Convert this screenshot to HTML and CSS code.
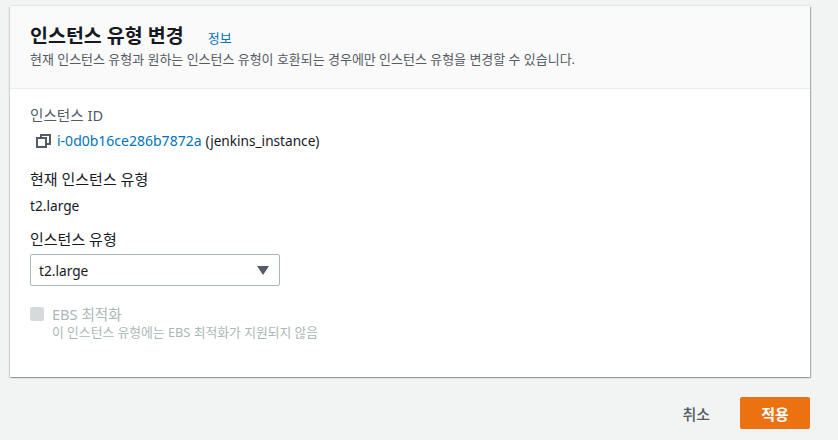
FILE: index.html
```html
<!DOCTYPE html>
<html lang="ko">
<head>
  <meta charset="UTF-8">
  <title>인스턴스 유형 변경</title>
  <link rel="stylesheet" href="styles.css">
</head>
<body>
  <div class="container">
    <div class="card">
      <div class="card-header">
        <div class="title-row">
          <h1>인스턴스 유형 변경</h1>
          <a class="info-link" href="#">정보</a>
        </div>
        <p class="description">현재 인스턴스 유형과 원하는 인스턴스 유형이 호환되는 경우에만 인스턴스 유형을 변경할 수 있습니다.</p>
      </div>
      <div class="card-body">
        <div class="field-label muted">인스턴스 ID</div>
        <div class="instance-row">
          <svg class="copy-icon" width="15" height="14" viewBox="0 0 15 14" fill="none" stroke="#545b64" stroke-width="2">
            <rect x="1" y="4" width="9" height="9"/>
            <path d="M5 4V1h9v9h-4"/>
          </svg>
          <a class="instance-link" href="#">i-0d0b16ce286b7872a</a>
          <span class="instance-name">(jenkins_instance)</span>
        </div>
        <div class="field-label current-label">현재 인스턴스 유형</div>
        <div class="current-value">t2.large</div>
        <div class="field-label type-label">인스턴스 유형</div>
        <div class="select-box">
          <span>t2.large</span>
          <span class="select-arrow"></span>
        </div>
        <div class="checkbox-row">
          <span class="checkbox"></span>
          <div>
            <div class="checkbox-label">EBS 최적화</div>
            <div class="checkbox-hint">이 인스턴스 유형에는 EBS 최적화가 지원되지 않음</div>
          </div>
        </div>
      </div>
    </div>
    <div class="actions">
      <button class="btn-cancel">취소</button>
      <button class="btn-apply">적용</button>
    </div>
  </div>
</body>
</html>
```

FILE: styles.css
```css
body {
  margin: 0;
  background-color: #f2f3f3;
  color: #16191f;
  font-family: "Noto Sans", "Noto Sans CJK KR", sans-serif;
  font-size: 14px;
  line-height: 20px;
}

.container {
  width: 800px;
  padding: 6px 28px 0 10px;
}

/* Card */
.card {
  background-color: #ffffff;
  height: 371px;
  box-sizing: border-box;
  box-shadow: 1px 1px 1px 0 rgba(0, 28, 36, 0.3), -1px 1px 1px 0 rgba(0, 28, 36, 0.15), 0 -1px 1px 0 rgba(0, 28, 36, 0.06);
}

.card-header {
  height: 83px;
  box-sizing: border-box;
  padding: 18px 20px 0;
  background-color: #fafafa;
  border-bottom: 1px solid #eaeded;
}

.title-row {
  display: flex;
  align-items: baseline;
  height: 24px;
}

h1 {
  margin: 0;
  font-size: 19.5px;
  font-weight: 700;
  line-height: 24px;
}

.info-link {
  margin-left: 24px;
  color: #0073bb;
  font-size: 13px;
  text-decoration: none;
}

.description {
  margin: 1px 0 0;
  color: #545b64;
  font-size: 12.97px;
  line-height: 20px;
}

.card-body {
  padding: 16px 20px 0;
}

.field-label {
  font-size: 15px;
}

.muted {
  color: #545b64;
  font-size: 14.6px;
}

.instance-row {
  display: flex;
  align-items: center;
  gap: 4px;
  margin-top: 6px;
  padding-left: 6px;
}

.copy-icon {
  margin-right: 2px;
}

.instance-link {
  color: #0073bb;
  text-decoration: none;
}

.instance-name {
  font-size: 13.65px;
}

.current-label {
  margin-top: 18px;
}

.current-value {
  margin-top: 7px;
  font-size: 13.7px;
}

.type-label {
  margin-top: 13px;
}

/* Select */
.select-box {
  display: flex;
  align-items: center;
  justify-content: space-between;
  width: 250px;
  height: 32px;
  box-sizing: border-box;
  margin-top: 5px;
  padding: 1px 10px 0 8px;
  border: 1px solid #aab7b8;
  border-radius: 2px;
  font-size: 13.7px;
}

.select-arrow {
  width: 0;
  height: 0;
  border-left: 6px solid transparent;
  border-right: 6px solid transparent;
  border-top: 9px solid #545b64;
}

/* Checkbox */
.checkbox-row {
  display: flex;
  gap: 8px;
  margin-top: 19px;
}

.checkbox {
  width: 14px;
  height: 14px;
  margin-top: 2px;
  background-color: #d5dbdb;
  border-radius: 2px;
}

.checkbox-label {
  color: #aab7b8;
  font-size: 14.6px;
  margin-top: -1px;
}

.checkbox-hint {
  color: #aab7b8;
  font-size: 12.8px;
  line-height: 16px;
}

/* Footer actions */
.actions {
  display: flex;
  justify-content: flex-end;
  align-items: center;
  margin-top: 20px;
}

button {
  border: none;
  font-family: inherit;
  font-size: 15px;
  font-weight: 500;
  height: 32px;
}

.btn-cancel {
  background: none;
  color: #545b64;
  margin-right: 20px;
  padding: 0 10px;
}

.btn-apply {
  width: 70px;
  background-color: #ec7211;
  color: #ffffff;
  font-weight: 700;
  border-radius: 2px;
}
```
